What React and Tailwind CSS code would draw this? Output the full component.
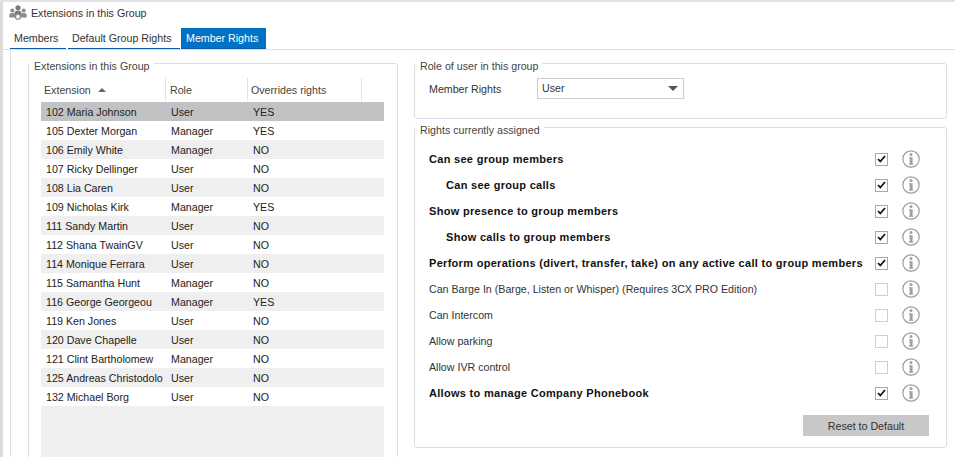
import React from 'react'

const members = [
  ['102 Maria Johnson', 'User', 'YES'],
  ['105 Dexter Morgan', 'Manager', 'YES'],
  ['106 Emily White', 'Manager', 'NO'],
  ['107 Ricky Dellinger', 'User', 'NO'],
  ['108 Lia Caren', 'User', 'NO'],
  ['109 Nicholas Kirk', 'Manager', 'YES'],
  ['111 Sandy Martin', 'User', 'NO'],
  ['112 Shana TwainGV', 'User', 'NO'],
  ['114 Monique Ferrara', 'User', 'NO'],
  ['115 Samantha Hunt', 'Manager', 'NO'],
  ['116 George Georgeou', 'Manager', 'YES'],
  ['119 Ken Jones', 'User', 'NO'],
  ['120 Dave Chapelle', 'User', 'NO'],
  ['121 Clint Bartholomew', 'Manager', 'NO'],
  ['125 Andreas Christodolo', 'User', 'NO'],
  ['132 Michael Borg', 'User', 'NO'],
]

const rights = [
  { label: 'Can see group members', bold: true, checked: true },
  { label: 'Can see group calls', bold: true, checked: true, indent: true },
  { label: 'Show presence to group members', bold: true, checked: true },
  { label: 'Show calls to group members', bold: true, checked: true, indent: true },
  { label: 'Perform operations (divert, transfer, take) on any active call to group members', bold: true, checked: true },
  { label: 'Can Barge In (Barge, Listen or Whisper) (Requires 3CX PRO Edition)' },
  { label: 'Can Intercom' },
  { label: 'Allow parking' },
  { label: 'Allow IVR control' },
  { label: 'Allows to manage Company Phonebook', bold: true, checked: true },
]

function GroupIcon() {
  return (
    <svg width="18" height="15" viewBox="0 0 18 15" fill="#8c8c8c">
      <circle cx="3.300" cy="5.500" r="2" />
      <path d="M0.300 12.500v-2.500C0.300 8.500 1.800 8 3.300 8S6 8.500 6 10v2.500z" />
      <circle cx="14.700" cy="5.500" r="2" />
      <path d="M12 12.500V10c0-1.500 1.200-2 2.700-2s3 .5 3 2v2.500z" />
      <circle cx="9" cy="2.800" r="2.600" fill="#7a7a7a" />
      <path d="M5.500 10V7.800C5.500 6.300 7 5.800 9 5.800s3.500.5 3.500 2V10z" fill="#7a7a7a" />
      <circle cx="9" cy="11.700" r="2.500" fill="#fff" stroke="#8c8c8c" strokeWidth="1.300" />
    </svg>
  )
}

function InfoIcon() {
  return (
    <svg width="18" height="18" viewBox="0 0 18 18" fill="none">
      <circle cx="9" cy="9" r="8.200" stroke="#9c9c9c" strokeWidth="1.200" />
      <circle cx="9" cy="4.500" r="1.500" fill="#a0a0a0" />
      <path d="M7 7.200h3.600v6.600h.8v1H6.800v-1h.9V8.200H7z" fill="#a0a0a0" />
    </svg>
  )
}

function Checkbox({ checked }) {
  return (
    <span className={`w-[13px] h-[13px] border flex items-center justify-center bg-white ${checked ? 'border-[#a8a8a8]' : 'border-[#cfcfcf]'}`}>
      {checked && (
        <svg width="9" height="8" viewBox="0 0 9 8" fill="none">
          <path d="M1 4l2.300 2.500L8 1" stroke="#111" strokeWidth="1.800" />
        </svg>
      )}
    </span>
  )
}

function Group({ title, className, children }) {
  return (
    <fieldset className={`border border-[#d8dfe6] rounded-[3px] min-w-0 ${className}`}>
      <legend className="ml-[1px] px-[4px] pt-[6px] text-[10.67px] leading-[13px] text-[#444]">{title}</legend>
      {children}
    </fieldset>
  )
}

export default function App() {
  return (
    <div className="w-[955px] h-[457px] overflow-hidden bg-white flex border-t-2 border-[#e2e2e2] text-[10.67px] text-[#222]" style={{ fontFamily: '"Liberation Sans", Arial, sans-serif' }}>
      <div className="w-[3px] bg-[#dcdcdc]" />
      <div className="flex-1 min-w-0 flex flex-col">
        <div className="h-[26px] flex items-center pl-[6px] gap-[4px] pb-[5px] text-[#333]">
          <GroupIcon />
          <span>Extensions in this Group</span>
        </div>

        <div className="flex pl-[7px] h-[22px] border-b border-[#d8dfe6]">
          <div className="w-[56px] mr-[2px] pl-[4px] pb-[1px] flex items-center border-b border-[#0a5ca8] text-[#333]">Members</div>
          <div className="w-[112px] mr-[1px] pl-[4px] pb-[1px] flex items-center border-b border-[#0a5ca8] text-[#333]">Default Group Rights</div>
          <div className="w-[85px] pl-[5px] pb-[1px] flex items-center bg-[#0072c6] border-b border-[#0a5ca8] text-white">Member Rights</div>
        </div>

        <div className="flex-1 min-h-0 ml-[7px] border-l border-[#d8dfe6] flex pl-[17px] pt-[4px] gap-[16px] items-start">
          <Group title="Extensions in this Group" className="w-[370px] h-[420px] shrink-0">
            <div className="ml-[12px] mt-[5px] w-[343px] h-[400px] flex flex-col">
              <div className="h-[24px] pb-[1px] grid grid-cols-[125px_82px_114px] text-[#444] shrink-0">
                <div className="pl-[3px] flex items-center gap-[7px] border-r border-[#dfe4e8]">
                  Extension
                  <span className="w-0 h-0 border-l-[4px] border-r-[4px] border-b-[4px] border-l-transparent border-r-transparent border-b-[#666]" />
                </div>
                <div className="pl-[4px] flex items-center border-r border-[#dfe4e8]">Role</div>
                <div className="pl-[3px] flex items-center border-r border-[#dfe4e8]">Overrides rights</div>
              </div>
              <div className="flex-1 bg-[#efefef] flex flex-col">
                {members.map((m, i) => (
                  <div
                    key={m[0]}
                    className={`h-[19px] shrink-0 grid grid-cols-[125px_82px_1fr] items-center text-[#222] ${i === 0 ? 'bg-[#c1c2c3]' : i % 2 === 1 ? 'bg-white' : 'bg-[#efefef]'}`}
                  >
                    <div className="pl-[5px] whitespace-nowrap">{m[0]}</div>
                    <div className="pl-[5px]">{m[1]}</div>
                    <div className="pl-[5px]">{m[2]}</div>
                  </div>
                ))}
              </div>
            </div>
          </Group>

          <div className="w-[533px] shrink-0 flex flex-col">
            <Group title="Role of user in this group" className="h-[65px]">
              <div className="flex items-center h-[21px] mt-[5px] pl-[14px]">
                <span className="w-[108px] text-[#333]">Member Rights</span>
                <div className="w-[147px] h-[21px] border border-[#ccc] flex items-center justify-between pl-[4px] pr-[5px] pb-[1px] text-[#333]">
                  User
                  <span className="w-0 h-0 border-l-[5px] border-r-[5px] border-t-[5px] border-l-transparent border-r-transparent border-t-[#555]" />
                </div>
              </div>
            </Group>

            <Group title="Rights currently assigned" className="h-[330px] -mt-[1px]">
              <div className="pt-[9px] pl-[14px] pr-[26px] flex flex-col">
                {rights.map((r) => (
                  <div key={r.label} className="h-[26px] flex items-center">
                    <span className={`flex-1 min-w-0 whitespace-nowrap ${r.indent ? 'pl-[17px]' : ''} ${r.bold ? 'font-bold text-[11px] tracking-[0.3px] text-[#111]' : 'text-[#333]'}`}>{r.label}</span>
                    <Checkbox checked={r.checked} />
                    <span className="ml-[14px] flex"><InfoIcon /></span>
                  </div>
                ))}
              </div>
              <div className="flex justify-end mt-[9px] pr-[17px]">
                <button className="w-[126px] h-[21px] bg-[#c8c8c8] text-[#333] text-center">Reset to Default</button>
              </div>
            </Group>
          </div>
        </div>
      </div>
    </div>
  )
}
